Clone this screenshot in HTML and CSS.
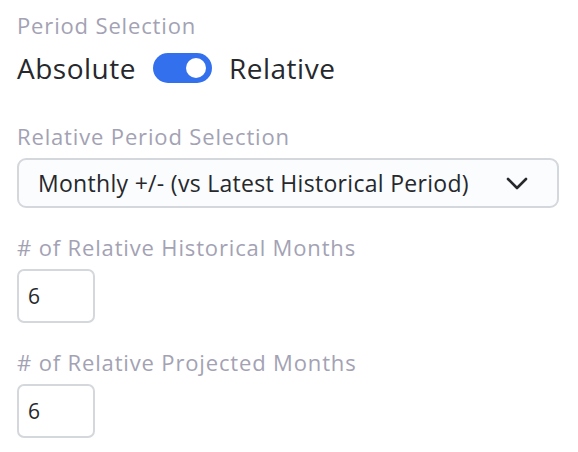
FILE: index.html
```html
<!DOCTYPE html>
<html>
<head>
<meta charset="utf-8">
<link rel="stylesheet" href="styles.css">
</head>
<body>
<div class="panel">
  <div class="field first">
    <div class="label">Period Selection</div>
    <div class="switch-row">
      <span class="opt">Absolute</span>
      <span class="toggle"><span class="knob"></span></span>
      <span class="opt">Relative</span>
    </div>
  </div>
  <div class="field">
    <div class="label">Relative Period Selection</div>
    <div class="select">
      <span>Monthly +/- (vs Latest Historical Period)</span>
      <svg class="chev" width="22" height="13" viewBox="0 0 22 13"><path d="M2 2 L11 11 L20 2" fill="none" stroke="#26282c" stroke-width="2.6" stroke-linecap="round" stroke-linejoin="round"/></svg>
    </div>
  </div>
  <div class="field">
    <div class="label"># of Relative Historical Months</div>
    <div class="num">6</div>
  </div>
  <div class="field">
    <div class="label"># of Relative Projected Months</div>
    <div class="num">6</div>
  </div>
</div>
</body>
</html>
```
FILE: styles.css
```css
html, body { margin: 0; padding: 0; background: #ffffff; }
body { font-family: "Open Sans", Lato, sans-serif; color: #26282c; }
.panel { padding: 12px 17px 0 17px; width: 542px; display: flex; flex-direction: column; gap: 26px; }
.field { display: flex; flex-direction: column; gap: 9px; }
.field.first { gap: 15px; margin-bottom: 14px; }
.label { font-size: 22px; line-height: 26px; color: #a3a2b4; letter-spacing: 0.85px; }
.switch-row { display: flex; align-items: center; gap: 17px; height: 30px; }
.opt { font-size: 28px; line-height: 30px; color: #26282c; letter-spacing: 0.5px; }
.toggle { width: 59px; height: 30px; border-radius: 15px; background: #3370ee; display: flex; align-items: center; justify-content: flex-end; padding-right: 6px; box-sizing: border-box; }
.knob { width: 20px; height: 20px; border-radius: 50%; background: #fff; }
.select { height: 50px; box-sizing: border-box; border: 2px solid #d4d7dc; border-radius: 9px; background: #fbfcfe; display: flex; align-items: center; justify-content: space-between; padding: 0 29px 0 19px; font-size: 23px; letter-spacing: 0.3px; }
.chev { display: block; }
.num { width: 78px; height: 54px; box-sizing: border-box; border: 2px solid #d4d7dc; border-radius: 7px; display: flex; align-items: center; padding-left: 9px; font-size: 21px; }
```
